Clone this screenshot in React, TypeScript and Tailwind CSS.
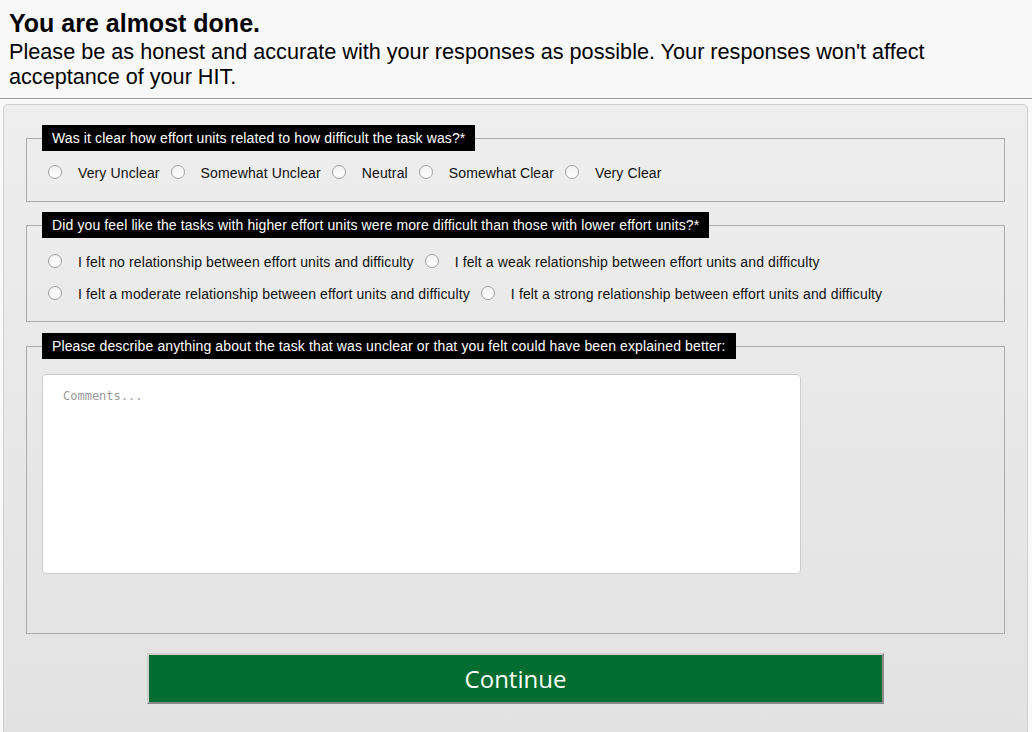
import React from "react";

function Radio() {
  return (
    <span className="inline-block w-[14px] h-[14px] rounded-full border border-[#a0a0a0] bg-gradient-to-b from-[#f2f2f2] to-[#ffffff] shrink-0" />
  );
}

function Options({ items }: { items: string[] }) {
  return (
    <div className="flex flex-wrap">
      {items.map((t) => (
        <label key={t} className="flex items-center h-[32px] cursor-pointer">
          <span className="ml-[6px] flex items-center">
            <Radio />
          </span>
          <span className="ml-[16px] mr-[5px] text-[14px] tracking-[0.12px] text-[#111] pt-[3px]">{t}</span>
        </label>
      ))}
    </div>
  );
}

function Fieldset({ legend, children, className }: { legend: string; children: React.ReactNode; className?: string }) {
  return (
    <fieldset className={"border border-[#ababab] px-[15px] " + (className ?? "")}>
      <legend className="bg-black text-white text-[14px] tracking-[0.12px] h-[26px] leading-[26px] px-[10px]">{legend}</legend>
      {children}
    </fieldset>
  );
}

export default function App() {
  return (
    <div className="bg-[#f9f9f9] font-['Liberation_Sans',Arial,sans-serif] text-black overflow-hidden h-[732px]">
      <header className="px-[9px] pt-[8px] pb-[9px] border-b border-[#9a9a9a]">
        <h1 className="text-[25px] leading-[31px] font-bold">You are almost done.</h1>
        <p className="text-[21.65px] leading-[25px]">
          Please be as honest and accurate with your responses as possible. Your responses won't affect acceptance of your HIT.
        </p>
      </header>
      <main className="ml-[3px] mr-[4px] mt-[5px] rounded-[5px] border border-[#cfcfcf] bg-gradient-to-b from-[#eeeeee] to-[#e2e2e2] px-[22px] pt-[20px] pb-[40px]">
        <Fieldset legend="Was it clear how effort units related to how difficult the task was?*" className="pt-[5px] pb-[13px]">
          <Options items={["Very Unclear", "Somewhat Unclear", "Neutral", "Somewhat Clear", "Very Clear"]} />
        </Fieldset>
        <Fieldset
          legend="Did you feel like the tasks with higher effort units were more difficult than those with lower effort units?*"
          className="mt-[10px] pt-[7px] pb-[12px]"
        >
          <Options
            items={[
              "I felt no relationship between effort units and difficulty",
              "I felt a weak relationship between effort units and difficulty",
              "I felt a moderate relationship between effort units and difficulty",
              "I felt a strong relationship between effort units and difficulty",
            ]}
          />
        </Fieldset>
        <Fieldset
          legend="Please describe anything about the task that was unclear or that you felt could have been explained better:"
          className="mt-[11px] pt-[15px] pb-[59px]"
        >
          <textarea
            placeholder="Comments..."
            className="block w-[759px] h-[200px] bg-white border border-[#cccccc] rounded-[4px] px-[20px] pt-[12px] font-['DejaVu_Sans_Mono',monospace] text-[12px] placeholder:text-[#9a9a9a] resize-none outline-none"
          />
        </Fieldset>
        <div className="flex justify-center mt-[20px]">
          <button className="w-[737px] h-[51px] -mt-[1px] bg-[#016d30] border-2 border-t-[#cfcfcf] border-l-[#cfcfcf] border-r-[#8a8a8a] border-b-[#8a8a8a] text-white text-[24px] font-['Open_Sans',sans-serif]">
            Continue
          </button>
        </div>
      </main>
    </div>
  );
}
